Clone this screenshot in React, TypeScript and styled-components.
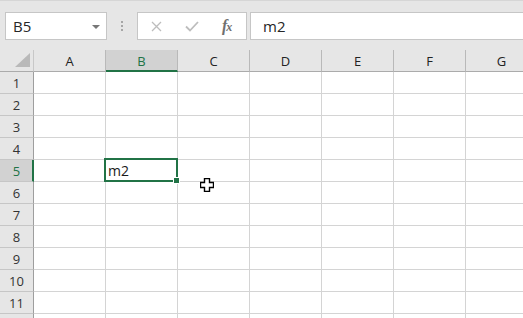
import styled, { createGlobalStyle } from 'styled-components'

const columns = ['A', 'B', 'C', 'D', 'E', 'F', 'G']
const rows = [1, 2, 3, 4, 5, 6, 7, 8, 9, 10, 11, 12]
const activeCol = 'B'
const activeRow = 5
const lastVisibleRow = 11
const green = '#217346'

export default function App() {
  return (
    <>
      <GlobalStyle />
      <Window>
        <Toolbar>
          <NameBox>
            <span>B5</span>
            <DropArrow />
          </NameBox>
          <Grip>
            <Dot />
            <Dot />
            <Dot />
          </Grip>
          <FnButtons>
            <svg width="11" height="11" viewBox="0 0 11 11">
              <path d="M1 1 L10 10 M10 1 L1 10" stroke="#bdbdbd" strokeWidth="1.3" fill="none" />
            </svg>
            <svg width="14" height="11" viewBox="0 0 14 11">
              <path d="M1 5.5 L5 9.5 L13 1" stroke="#bdbdbd" strokeWidth="1.8" fill="none" />
            </svg>
            <Fx>
              f<small>x</small>
            </Fx>
          </FnButtons>
          <FormulaInput>m2</FormulaInput>
        </Toolbar>

        <Sheet>
          <Corner>
            <svg width="15" height="14" viewBox="0 0 15 14">
              <path d="M15 0 L15 14 L0 14 Z" fill="#b9b9b9" />
            </svg>
          </Corner>
          {columns.map(c => (
            <ColHeader key={c} $active={c === activeCol}>{c}</ColHeader>
          ))}
          {rows.map(r => (
            <Row key={r} r={r} />
          ))}
        </Sheet>

        <Pointer width="14" height="14" viewBox="0 0 14 14">
          <path
            d="M4.5 0.5 H9.5 V4.5 H13.5 V9.5 H9.5 V13.5 H4.5 V9.5 H0.5 V4.5 H4.5 Z"
            fill="#fff"
            stroke="#000"
            strokeWidth="1.4"
          />
        </Pointer>
      </Window>
    </>
  )
}

function Row({ r }: { r: number }) {
  return (
    <>
      {/* the row below 11 is only a sliver at the window edge, its number is out of view */}
      <RowHeader $active={r === activeRow}>{r <= lastVisibleRow ? r : ''}</RowHeader>
      {columns.map(c => {
        const active = r === activeRow && c === activeCol
        return (
          <Cell key={c} $selected={active}>
            {active && 'm2'}
            {active && <FillHandle />}
          </Cell>
        )
      })}
    </>
  )
}

const GlobalStyle = createGlobalStyle`
  html, body {
    margin: 0;
    padding: 0;
    background: #fff;
    overflow: hidden;
  }
  body {
    font-family: "Open Sans", "Noto Sans", sans-serif;
  }
`

const Window = styled.div`
  position: relative;
  width: 523px;
  height: 318px;
  overflow: hidden;
  background: #fff;
`

const Toolbar = styled.div`
  box-sizing: border-box;
  height: 50px;
  display: flex;
  align-items: flex-start;
  padding: 11px 0 0 5px;
  background: #e6e6e6;
  border-top: 1px solid #d6d6d6;
  overflow: hidden;
`

const NameBox = styled.div`
  box-sizing: border-box;
  width: 102px;
  height: 28px;
  display: flex;
  align-items: center;
  justify-content: space-between;
  padding: 0 6px 0 7px;
  background: #fff;
  border: 1px solid #c6c6c6;
  font-size: 15px;
  color: #262626;
`

const DropArrow = styled.span`
  width: 0;
  height: 0;
  margin-top: 1px;
  border-left: 4px solid transparent;
  border-right: 4px solid transparent;
  border-top: 4px solid #777;
`

const Grip = styled.div`
  display: flex;
  flex-direction: column;
  gap: 2px;
  margin: 9px 14px 0 14px;
`

const Dot = styled.span`
  width: 2px;
  height: 2px;
  background: #a6a6a6;
`

const FnButtons = styled.div`
  box-sizing: border-box;
  width: 110px;
  height: 28px;
  display: flex;
  align-items: center;
  gap: 23px;
  padding-left: 13px;
  background: #fff;
  border: 1px solid #c6c6c6;
`

const Fx = styled.span`
  font-family: "Liberation Serif", "DejaVu Serif", serif;
  font-style: italic;
  font-weight: bold;
  font-size: 16px;
  color: #707070;
  letter-spacing: -1px;

  small {
    font-size: 12px;
  }
`

const FormulaInput = styled.div`
  box-sizing: border-box;
  flex: 1;
  height: 28px;
  margin-left: 3px;
  margin-right: -10px;
  display: flex;
  align-items: center;
  padding-left: 12px;
  background: #fff;
  border: 1px solid #c6c6c6;
  font-size: 15px;
  color: #262626;
`

const Sheet = styled.div`
  display: grid;
  grid-template-columns: 34px repeat(7, 72px);
  grid-auto-rows: 22px;
  width: 538px;
`

const Corner = styled.div`
  box-sizing: border-box;
  display: flex;
  align-items: flex-end;
  justify-content: flex-end;
  padding: 0 3px 4px 0;
  background: #e6e6e6;
  border-right: 1px solid #c8c8c8;
  border-bottom: 1px solid #ababab;
`

const ColHeader = styled.div<{ $active?: boolean }>`
  box-sizing: border-box;
  display: flex;
  align-items: center;
  justify-content: center;
  background: ${p => (p.$active ? '#d2d2d2' : '#e6e6e6')};
  border-right: 1px solid #b9b9b9;
  border-bottom: ${p => (p.$active ? `2px solid ${green}` : '1px solid #ababab')};
  padding-top: ${p => (p.$active ? '1px' : '0')};
  font-size: 13px;
  color: ${p => (p.$active ? green : '#222')};
`

const RowHeader = styled.div<{ $active?: boolean }>`
  box-sizing: border-box;
  display: flex;
  align-items: center;
  justify-content: center;
  background: ${p => (p.$active ? '#d2d2d2' : '#e6e6e6')};
  border-right: ${p => (p.$active ? `2px solid ${green}` : '1px solid #9e9e9e')};
  border-bottom: 1px solid #c6c6c6;
  padding-left: ${p => (p.$active ? '1px' : '0')};
  font-size: 13px;
  color: ${p => (p.$active ? green : '#333')};
`

const Cell = styled.div<{ $selected?: boolean }>`
  box-sizing: border-box;
  position: relative;
  display: flex;
  align-items: center;
  padding-left: 2px;
  border-right: 1px solid #d4d4d4;
  border-bottom: 1px solid #d4d4d4;
  font-size: 14px;
  color: #1a1a1a;

  ${p =>
    p.$selected &&
    `
    &::after {
      content: '';
      position: absolute;
      inset: -2px -1px -1px -2px;
      border: 2px solid ${green};
      z-index: 1;
    }
  `}
`

const FillHandle = styled.span`
  position: absolute;
  right: -3px;
  bottom: -3px;
  width: 5px;
  height: 5px;
  background: ${green};
  border: 1px solid #fff;
  z-index: 2;
`

const Pointer = styled.svg`
  position: absolute;
  left: 200px;
  top: 178px;
`
